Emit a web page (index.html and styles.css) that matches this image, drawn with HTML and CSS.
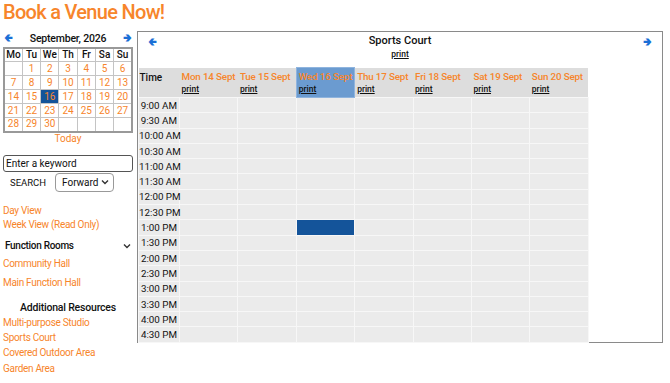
FILE: index.html
```html
<!DOCTYPE html>
<html lang="en">
<head>
  <meta charset="UTF-8">
  <title>Book a Venue Now!</title>
  <link rel="stylesheet" href="styles.css">
</head>
<body>
  <h1 class="page-title">Book a Venue Now!</h1>

  <div class="layout">
    <!-- Sidebar -->
    <aside class="sidebar">
      <div class="cal-head">
        <span class="arrow">&#129152;</span>
        <span class="cal-month">September, 2026</span>
        <span class="arrow">&#129154;</span>
      </div>
      <table class="mini-cal">
        <tr><th>Mo</th><th>Tu</th><th>We</th><th>Th</th><th>Fr</th><th>Sa</th><th>Su</th></tr>
        <tr><td></td><td>1</td><td>2</td><td>3</td><td>4</td><td>5</td><td>6</td></tr>
        <tr><td>7</td><td>8</td><td>9</td><td>10</td><td>11</td><td>12</td><td>13</td></tr>
        <tr><td>14</td><td>15</td><td class="selected">16</td><td>17</td><td>18</td><td>19</td><td>20</td></tr>
        <tr><td>21</td><td>22</td><td>23</td><td>24</td><td>25</td><td>26</td><td>27</td></tr>
        <tr><td>28</td><td>29</td><td>30</td><td></td><td></td><td></td><td></td></tr>
      </table>
      <a class="today" href="#">Today</a>

      <input class="keyword" type="text" placeholder="Enter a keyword">
      <div class="search-row">
        <span class="search-label">SEARCH</span>
        <select class="direction">
          <option>Forward</option>
          <option>Backward</option>
        </select>
      </div>

      <div class="views">
        <a href="#">Day View</a>
        <a href="#">Week View (Read Only)</a>
      </div>

      <div class="group-toggle">
        <span>Function Rooms</span>
        <svg width="8" height="6" viewBox="0 0 8 6"><path d="M1 1.5 L4 4.5 L7 1.5" fill="none" stroke="#333" stroke-width="1.4"/></svg>
      </div>
      <div class="group-links">
        <a href="#">Community Hall</a>
        <a href="#">Main Function Hall</a>
      </div>

      <h3 class="group-title">Additional Resources</h3>
      <div class="resource-links">
        <a href="#">Multi-purpose Studio</a>
        <a href="#">Sports Court</a>
        <a href="#">Covered Outdoor Area</a>
        <a href="#">Garden Area</a>
      </div>
    </aside>

    <!-- Week schedule -->
    <main class="panel">
      <div class="panel-head">
        <span class="arrow">&#129152;</span>
        <div class="panel-title">
          <div class="venue-name">Sports Court</div>
          <a class="print" href="#">print</a>
        </div>
        <span class="arrow">&#129154;</span>
      </div>

      <table class="week">
        <thead>
          <tr>
            <th class="time-col">Time</th>
            <th><span class="day">Mon 14 Sept</span><a class="print" href="#">print</a></th>
            <th><span class="day">Tue 15 Sept</span><a class="print" href="#">print</a></th>
            <th class="today-col"><span class="day">Wed 16 Sept</span><a class="print" href="#">print</a></th>
            <th><span class="day">Thu 17 Sept</span><a class="print" href="#">print</a></th>
            <th><span class="day">Fri 18 Sept</span><a class="print" href="#">print</a></th>
            <th><span class="day">Sat 19 Sept</span><a class="print" href="#">print</a></th>
            <th><span class="day">Sun 20 Sept</span><a class="print" href="#">print</a></th>
          </tr>
        </thead>
        <tbody id="week-body"></tbody>
      </table>
    </main>
  </div>

  <script>
    // Build the half-hour rows
    const times = ['9:00 AM', '9:30 AM', '10:00 AM', '10:30 AM', '11:00 AM', '11:30 AM',
      '12:00 PM', '12:30 PM', '1:00 PM', '1:30 PM', '2:00 PM', '2:30 PM',
      '3:00 PM', '3:30 PM', '4:00 PM', '4:30 PM'];
    const body = document.getElementById('week-body');

    times.forEach(function(t) {
      const row = document.createElement('tr');
      let html = '<td class="time-col">' + t + '</td>';
      for (let d = 0; d < 7; d++) {
        if (t === '1:00 PM' && d === 2) {
          html += '<td class="booked"></td>';
        } else {
          html += '<td></td>';
        }
      }
      row.innerHTML = html;
      body.appendChild(row);
    });
  </script>
</body>
</html>
```

FILE: styles.css
```css
/* Reset Styles */
* {
  margin: 0;
  padding: 0;
  box-sizing: border-box;
}

body {
  font-family: Roboto, 'Liberation Sans', sans-serif;
  font-size: 10px;
  color: #111;
  background-color: #fff;
  padding: 0 7px 0 3px;
}

a {
  color: #f7852b;
  text-decoration: none;
}

.page-title {
  color: #f7852b;
  font-size: 20px;
  font-weight: 500;
  letter-spacing: -0.7px;
  line-height: 24px;
}

.layout {
  display: flex;
  gap: 4px;
  margin-top: 7px;
}

/* Sidebar */
.sidebar {
  width: 130px;
  flex-shrink: 0;
}

.arrow {
  color: #1a6fd6;
  font-size: 11px;
  line-height: 12px;
}

.cal-head {
  display: flex;
  justify-content: space-between;
  align-items: center;
  height: 14px;
  padding: 0 1px;
}

.cal-month {
  font-size: 10.5px;
  font-weight: 500;
  letter-spacing: -0.2px;
}

.mini-cal {
  width: 130px;
  border-collapse: collapse;
  border: 2px solid #999;
  margin-top: 2px;
}

.mini-cal th,
.mini-cal td {
  border: 1px solid #c4c4c4;
  height: 14px;
  padding: 0;
  text-align: center;
  font-size: 10px;
  line-height: 12px;
  width: 18.5px;
}

.mini-cal th {
  font-weight: 500;
  height: 13px;
}

.mini-cal td {
  color: #f7852b;
}

.mini-cal td.selected {
  background-color: #14549a;
}

.today {
  display: block;
  text-align: center;
  font-size: 10px;
  margin-top: -1px;
  line-height: 13px;
}

.keyword {
  display: block;
  width: 130px;
  height: 17px;
  margin-top: 10px;
  border: 1px solid #555;
  border-radius: 3px;
  padding: 0 2px;
  font-family: inherit;
  font-size: 10px;
}

.keyword::placeholder {
  color: #111;
}

.search-row {
  display: flex;
  align-items: center;
  margin-top: 1px;
}

.search-label {
  font-size: 9.5px;
  margin-left: 7px;
  width: 45px;
}

.direction {
  appearance: none;
  width: 59px;
  height: 19px;
  font-family: inherit;
  font-size: 10px;
  color: #111;
  border: 1px solid #999;
  border-radius: 4px;
  padding-left: 6px;
  background: #fff url("data:image/svg+xml;utf8,<svg xmlns='http://www.w3.org/2000/svg' width='8' height='6' viewBox='0 0 8 6'><path d='M1 1.5 L4 4.5 L7 1.5' fill='none' stroke='%23333' stroke-width='1.4'/></svg>") no-repeat right 4px center;
}

.views {
  margin-top: 12px;
}

.views a,
.group-links a,
.resource-links a {
  display: block;
  font-size: 10px;
  letter-spacing: -0.3px;
  line-height: 14px;
}

.group-toggle {
  display: flex;
  justify-content: space-between;
  align-items: center;
  margin-top: 7px;
  padding: 0 2px;
  font-weight: 500;
  font-size: 10px;
  letter-spacing: -0.3px;
  line-height: 14px;
}

.group-links {
  margin-top: 4px;
}

.group-links a {
  margin-bottom: 5px;
}

.group-title {
  text-align: center;
  font-size: 10.5px;
  font-weight: 500;
  letter-spacing: -0.2px;
  margin-top: 11px;
  line-height: 14px;
}

.resource-links a {
  line-height: 15.4px;
}

/* Week panel */
.panel {
  width: 527px;
  height: 312px;
  border: 1px solid #8a8a8a;
  align-self: flex-start;
}

.panel-head {
  display: flex;
  justify-content: space-between;
  align-items: flex-start;
  padding: 1px 10px 0 10px;
  height: 35px;
}

.panel-head .arrow {
  margin-top: 3px;
}

.panel-title {
  text-align: center;
}

.venue-name {
  font-size: 11px;
  font-weight: 500;
  line-height: 14px;
  margin-top: 1px;
}

.print {
  color: #111;
  text-decoration: underline;
  font-size: 8.5px;
  font-weight: 500;
}

.week {
  border-collapse: collapse;
  width: 450px;
  table-layout: fixed;
}

.week th {
  background-color: #dddddd;
  height: 30px;
  text-align: left;
  vertical-align: top;
  padding: 2px 0 0 2px;
  width: 58.4px;
}

.week th.time-col {
  width: 41px;
  padding-left: 1px;
  color: #111;
  font-weight: 500;
  font-size: 10px;
  padding-top: 4px;
}

.week th.today-col {
  background-color: #6b9bd0;
  border: 1px solid #8fb4de;
}

.day {
  display: block;
  color: #f7852b;
  font-weight: 500;
  font-size: 9.8px;
  letter-spacing: -0.15px;
  white-space: nowrap;
  line-height: 13px;
  margin-bottom: 0;
}

.week td {
  background-color: #ebebeb;
  border: 1px solid #f7f7f7;
  height: 15.3px;
  padding: 0;
}

.week td.time-col {
  text-align: right;
  white-space: nowrap;
  padding-right: 2px;
  font-size: 9.8px;
  color: #111;
}

.week td.booked {
  background-color: #14549a;
}
```
